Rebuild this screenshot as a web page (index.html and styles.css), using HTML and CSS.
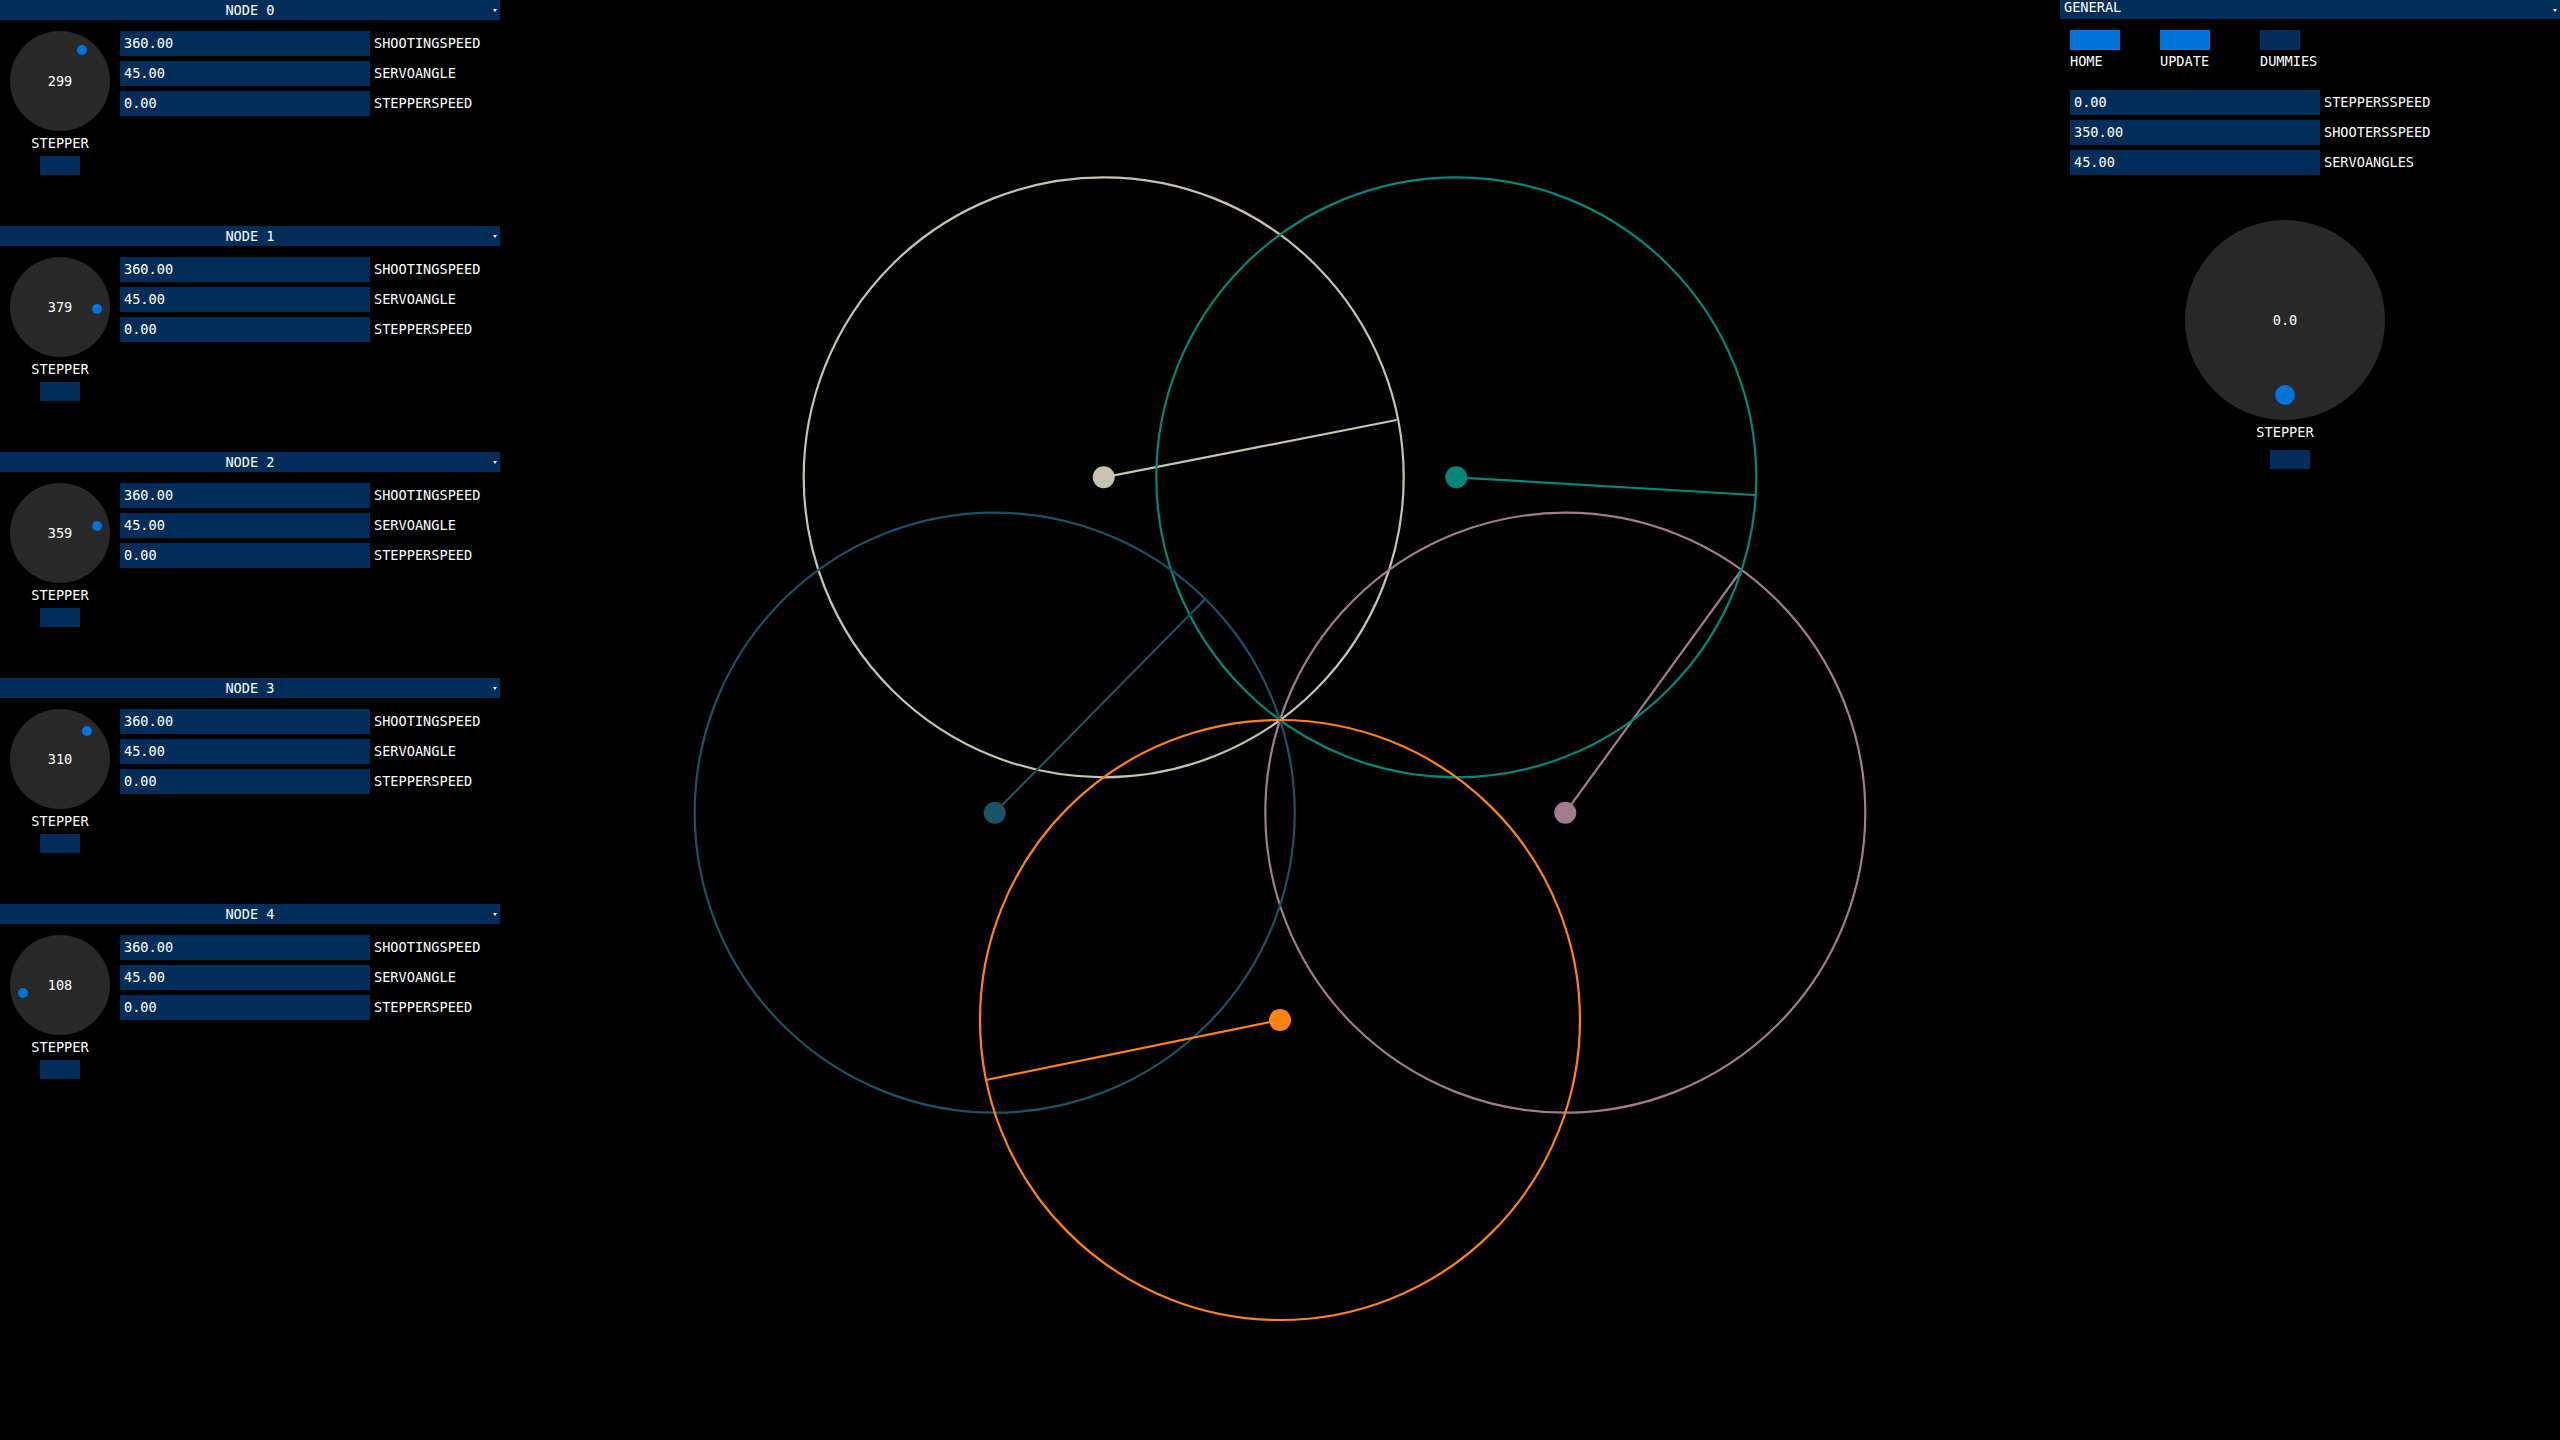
FILE: index.html
```html
<!DOCTYPE html>
<html>
<head>
<meta charset="utf-8">
<title>Nodes</title>
<link rel="stylesheet" href="styles.css">
</head>
<body>
<div class="app">
  <div class="nodes">
    <section class="node">
      <div class="head">NODE 0<span class="arrow"></span></div>
      <div class="body">
        <div class="knob-col">
          <div class="knob"><span class="kval">299</span><span class="kdot" style="left:71.7px;top:19.3px"></span></div>
          <div class="klabel">STEPPER</div>
          <div class="kbtn"></div>
        </div>
        <div class="fields">
          <div class="row"><div class="field">360.00</div><span class="flabel">SHOOTINGSPEED</span></div>
          <div class="row"><div class="field">45.00</div><span class="flabel">SERVOANGLE</span></div>
          <div class="row"><div class="field">0.00</div><span class="flabel">STEPPERSPEED</span></div>
        </div>
      </div>
    </section>
    <section class="node">
      <div class="head">NODE 1<span class="arrow"></span></div>
      <div class="body">
        <div class="knob-col">
          <div class="knob"><span class="kval">379</span><span class="kdot" style="left:87.3px;top:52px"></span></div>
          <div class="klabel">STEPPER</div>
          <div class="kbtn"></div>
        </div>
        <div class="fields">
          <div class="row"><div class="field">360.00</div><span class="flabel">SHOOTINGSPEED</span></div>
          <div class="row"><div class="field">45.00</div><span class="flabel">SERVOANGLE</span></div>
          <div class="row"><div class="field">0.00</div><span class="flabel">STEPPERSPEED</span></div>
        </div>
      </div>
    </section>
    <section class="node">
      <div class="head">NODE 2<span class="arrow"></span></div>
      <div class="body">
        <div class="knob-col">
          <div class="knob"><span class="kval">359</span><span class="kdot" style="left:86.7px;top:42.7px"></span></div>
          <div class="klabel">STEPPER</div>
          <div class="kbtn"></div>
        </div>
        <div class="fields">
          <div class="row"><div class="field">360.00</div><span class="flabel">SHOOTINGSPEED</span></div>
          <div class="row"><div class="field">45.00</div><span class="flabel">SERVOANGLE</span></div>
          <div class="row"><div class="field">0.00</div><span class="flabel">STEPPERSPEED</span></div>
        </div>
      </div>
    </section>
    <section class="node">
      <div class="head">NODE 3<span class="arrow"></span></div>
      <div class="body">
        <div class="knob-col">
          <div class="knob"><span class="kval">310</span><span class="kdot" style="left:76.5px;top:22.4px"></span></div>
          <div class="klabel">STEPPER</div>
          <div class="kbtn"></div>
        </div>
        <div class="fields">
          <div class="row"><div class="field">360.00</div><span class="flabel">SHOOTINGSPEED</span></div>
          <div class="row"><div class="field">45.00</div><span class="flabel">SERVOANGLE</span></div>
          <div class="row"><div class="field">0.00</div><span class="flabel">STEPPERSPEED</span></div>
        </div>
      </div>
    </section>
    <section class="node">
      <div class="head">NODE 4<span class="arrow"></span></div>
      <div class="body">
        <div class="knob-col">
          <div class="knob"><span class="kval">108</span><span class="kdot" style="left:13px;top:57.7px"></span></div>
          <div class="klabel">STEPPER</div>
          <div class="kbtn"></div>
        </div>
        <div class="fields">
          <div class="row"><div class="field">360.00</div><span class="flabel">SHOOTINGSPEED</span></div>
          <div class="row"><div class="field">45.00</div><span class="flabel">SERVOANGLE</span></div>
          <div class="row"><div class="field">0.00</div><span class="flabel">STEPPERSPEED</span></div>
        </div>
      </div>
    </section>
  </div>

  <div class="canvas">
    <svg width="1560" height="1440" viewBox="500 0 1560 1440" xmlns="http://www.w3.org/2000/svg" fill="none" stroke-width="2.2">
      <g stroke="#c8c3b0">
        <circle cx="1103.7" cy="477.3" r="300"/>
        <line x1="1103.7" y1="477.3" x2="1396.7" y2="420"/>
        <circle cx="1103.7" cy="477.3" r="11" fill="#c8c3b0" stroke="none"/>
      </g>
      <g stroke="#a07c8c">
        <circle cx="1565.3" cy="812.7" r="300"/>
        <line x1="1565.3" y1="812.7" x2="1741.5" y2="570"/>
        <circle cx="1565.3" cy="812.7" r="11" fill="#a07c8c" stroke="none"/>
      </g>
      <g stroke="#00877a">
        <circle cx="1456.3" cy="477.3" r="300"/>
        <line x1="1456.3" y1="477.3" x2="1755" y2="495"/>
        <circle cx="1456.3" cy="477.3" r="11" fill="#00877a" stroke="none"/>
      </g>
      <g stroke="#1a5266">
        <circle cx="994.7" cy="812.7" r="300"/>
        <line x1="994.7" y1="812.7" x2="1205" y2="599.3"/>
        <circle cx="994.7" cy="812.7" r="11" fill="#1a5266" stroke="none"/>
      </g>
      <g stroke="#ff8214">
        <circle cx="1280" cy="1020" r="300"/>
        <line x1="1280" y1="1020" x2="986" y2="1080"/>
        <circle cx="1280" cy="1020" r="11" fill="#ff8214" stroke="none"/>
      </g>
    </svg>
  </div>

  <aside class="general">
    <div class="ghead">GENERAL<span class="arrow"></span></div>
    <div class="gbody">
      <div class="buttons">
        <div class="bitem home"><div class="btn on"></div><span class="blabel">HOME</span></div>
        <div class="bitem update"><div class="btn on"></div><span class="blabel">UPDATE</span></div>
        <div class="bitem"><div class="btn toggle"></div><span class="blabel">DUMMIES</span></div>
      </div>
      <div class="fields gfields">
        <div class="row"><div class="field">0.00</div><span class="flabel">STEPPERSSPEED</span></div>
        <div class="row"><div class="field">350.00</div><span class="flabel">SHOOTERSSPEED</span></div>
        <div class="row"><div class="field">45.00</div><span class="flabel">SERVOANGLES</span></div>
      </div>
      <div class="bigknob-col">
        <div class="bigknob"><span class="kval">0.0</span><span class="bigdot"></span></div>
        <div class="klabel">STEPPER</div>
        <div class="kbtn shifted"></div>
      </div>
    </div>
  </aside>
</div>
</body>
</html>
```

FILE: styles.css
```css
* { box-sizing: border-box; }
html, body {
  margin: 0;
  padding: 0;
  background: #000;
}
body {
  width: 2560px;
  height: 1440px;
  overflow: hidden;
  color: #fff;
  font-family: "DejaVu Sans Mono", "Liberation Mono", monospace;
  font-size: 13.6px;
}
.app {
  display: flex;
  width: 2560px;
  height: 1440px;
}
.nodes {
  width: 500px;
  flex: none;
  display: flex;
  flex-direction: column;
}
.node {
  height: 226px;
}
.head, .ghead {
  position: relative;
  height: 20px;
  background: #002d5a;
  display: flex;
  align-items: center;
  justify-content: center;
  line-height: 20px;
}
.ghead {
  justify-content: flex-start;
  align-items: flex-start;
  padding-left: 4px;
  height: 19px;
  line-height: 15px;
}
.arrow {
  position: absolute;
  right: 3px;
  top: 9px;
  width: 0;
  height: 0;
  border-left: 2.5px solid transparent;
  border-right: 2.5px solid transparent;
  border-top: 3px solid #fff;
}
.body {
  display: flex;
  padding: 11px 0 0 10px;
  gap: 10px;
}
.knob-col {
  width: 100px;
  display: flex;
  flex-direction: column;
  align-items: center;
}
.knob {
  position: relative;
  width: 100px;
  height: 100px;
  border-radius: 50%;
  background: #282828;
  display: flex;
  align-items: center;
  justify-content: center;
}
.kdot {
  position: absolute;
  width: 10px;
  height: 10px;
  margin: -5px 0 0 -5px;
  border-radius: 50%;
  background: #0074d9;
}
.kval {
  line-height: 16px;
}
.klabel {
  margin-top: 4px;
  line-height: 16px;
}
.kbtn {
  margin-top: 5px;
  width: 40px;
  height: 19px;
  background: #002d5a;
}
.kbtn.shifted {
  margin-top: 10px;
  margin-left: 10px;
}
.fields {
  display: flex;
  flex-direction: column;
  gap: 5px;
}
.row {
  display: flex;
  align-items: center;
  gap: 4px;
}
.field {
  width: 250px;
  height: 25px;
  background: #002d5a;
  padding-left: 4px;
  line-height: 25px;
}
.flabel {
  line-height: 25px;
}
.canvas {
  flex: 1;
  height: 1440px;
}
.canvas svg {
  display: block;
}
.general {
  width: 500px;
  flex: none;
}
.gbody {
  padding: 11px 0 0 10px;
  display: flex;
  flex-direction: column;
}
.buttons {
  display: flex;
}
.bitem {
  display: flex;
  flex-direction: column;
}
.bitem.home { width: 90px; }
.bitem.update { width: 100px; }
.btn {
  width: 50px;
  height: 20px;
  background: #0074d9;
}
.btn.toggle {
  width: 40px;
  background: #002d5a;
}
.blabel {
  margin-top: 3px;
  line-height: 16px;
}
.gfields {
  margin-top: 21px;
}
.bigknob-col {
  margin-top: 45px;
  margin-left: 115px;
  width: 200px;
  display: flex;
  flex-direction: column;
  align-items: center;
}
.bigknob {
  position: relative;
  width: 200px;
  height: 200px;
  border-radius: 50%;
  background: #282828;
  display: flex;
  align-items: center;
  justify-content: center;
}
.bigdot {
  position: absolute;
  left: 90px;
  top: 165px;
  width: 20px;
  height: 20px;
  border-radius: 50%;
  background: #0074d9;
}
```
